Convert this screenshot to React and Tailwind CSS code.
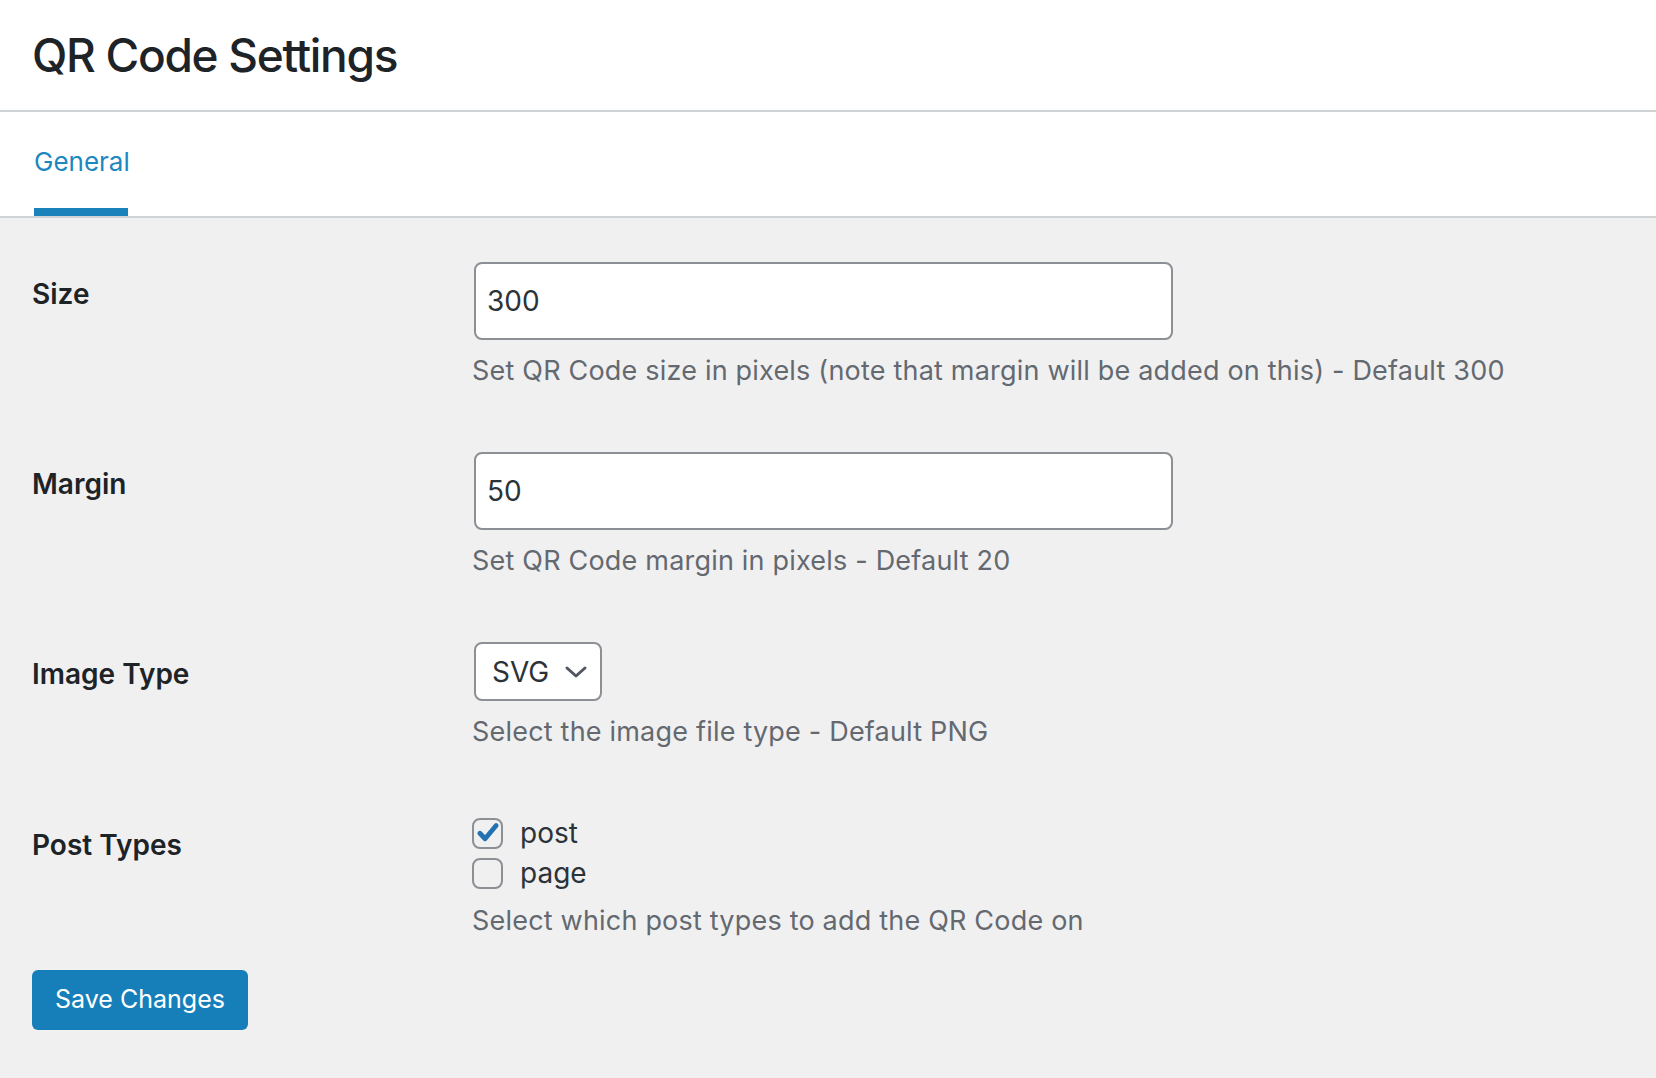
import React, { useState } from "react";

const font = { fontFamily: "Inter, 'Noto Sans', sans-serif" };

const Row = ({ label, children, last }) => (
  <div className="flex">
    <div className="w-[440px] shrink-0 pt-[41px] text-[28px] leading-[42px] font-semibold text-[#1d2327]">
      {label}
    </div>
    <div className={`pt-[30px] ${last ? "pb-0" : "pb-[28px]"}`}>{children}</div>
  </div>
);

const Desc = ({ children, className = "mt-[8px]" }) => (
  <p className={`${className} text-[27px] leading-[46px] tracking-[0.2px] text-[#646970]`}>{children}</p>
);

const Checkbox = ({ checked, onChange, label }) => (
  <label className="flex items-center h-[40px] cursor-pointer">
    <span
      onClick={onChange}
      className="w-[31px] h-[31px] rounded-[8px] border-2 border-[#8c8f94] flex items-center justify-center"
    >
      {checked && (
        <svg width="24" height="24" viewBox="0 0 20 20">
          <path
            d="M3.2 10.2 L7.6 14.8 L16.8 3.8"
            fill="none"
            stroke="#2271b1"
            strokeWidth="4"
            strokeLinecap="round"
            strokeLinejoin="round"
          />
        </svg>
      )}
    </span>
    <span className="ml-[17px] text-[28px] text-[#2c3338]">{label}</span>
  </label>
);

export default function App() {
  const [size, setSize] = useState("300");
  const [margin, setMargin] = useState("50");
  const [post, setPost] = useState(true);
  const [page, setPage] = useState(false);

  return (
    <div style={font} className="min-h-screen bg-[#f0f0f1]">
      {/* Title */}
      <div className="h-[112px] bg-white border-b-2 border-[#d0d3d6] flex items-center px-[32px]">
        <h1 className="text-[46px] font-medium tracking-[-1.3px] text-[#1d2327]">QR Code Settings</h1>
      </div>

      {/* Tabs */}
      <div className="h-[106px] bg-white border-b-2 border-[#d0d3d6] flex">
        <div className="ml-[34px] h-[104px] w-[94px] border-b-[8px] border-[#1a82bb] flex items-center pt-[2px]">
          <span className="text-[26px] text-[#1c87c0]">General</span>
        </div>
      </div>

      {/* Form */}
      <div className="pt-[14px] px-[32px]">
        <Row label="Size">
          <input
            value={size}
            onChange={(e) => setSize(e.target.value)}
            className="ml-[2px] w-[699px] h-[78px] bg-white border-2 border-[#8c8f94] rounded-[8px] px-[11px] text-[28px] text-[#2c3338] outline-none"
          />
          <Desc>Set QR Code size in pixels (note that margin will be added on this) - Default 300</Desc>
        </Row>

        <Row label="Margin">
          <input
            value={margin}
            onChange={(e) => setMargin(e.target.value)}
            className="ml-[2px] w-[699px] h-[78px] bg-white border-2 border-[#8c8f94] rounded-[8px] px-[11px] text-[28px] text-[#2c3338] outline-none"
          />
          <Desc>Set QR Code margin in pixels - Default 20</Desc>
        </Row>

        <Row label="Image Type">
          <div className="ml-[2px] w-[128px] h-[59px] bg-white border-2 border-[#8c8f94] rounded-[8px] flex items-center pl-[16px] pr-[11px] justify-between">
            <span className="text-[28px] text-[#2c3338]">SVG</span>
            <svg width="26" height="14" viewBox="0 0 26 14">
              <path d="M4 3 L13 11 L22 3" fill="none" stroke="#50575e" strokeWidth="3" strokeLinecap="round" strokeLinejoin="round" />
            </svg>
          </div>
          <Desc>Select the image file type - Default PNG</Desc>
        </Row>

        <Row label="Post Types" last>
          <Checkbox checked={post} onChange={() => setPost(!post)} label="post" />
          <Checkbox checked={page} onChange={() => setPage(!page)} label="page" />
          <Desc className="mt-[5px]">Select which post types to add the QR Code on</Desc>
        </Row>

        <div className="mt-[26px]">
          <button className="w-[216px] h-[60px] rounded-[6px] bg-[#167fb9] text-white text-[25px]">
            Save Changes
          </button>
        </div>
      </div>
    </div>
  );
}
